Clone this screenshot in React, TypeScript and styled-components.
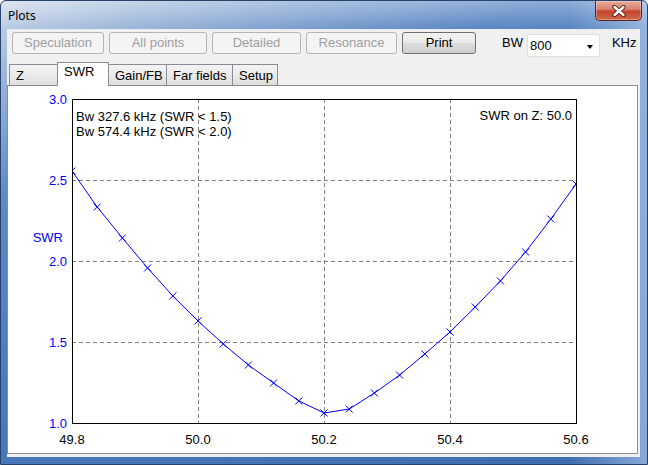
import React from 'react';
import styled, { createGlobalStyle } from 'styled-components';

const GlobalStyle = createGlobalStyle`
  html, body {
    margin: 0;
    padding: 0;
    background: #ffffff;
  }
  body {
    font-family: "Liberation Sans", Arial, sans-serif;
  }
`;

const Window = styled.div`
  width: 648px;
  height: 465px;
  box-sizing: border-box;
  display: flex;
  flex-direction: column;
  border: 1px solid #27436b;
  border-radius: 6px 6px 0 0;
  overflow: hidden;
  background:
    linear-gradient(180deg, rgba(255, 255, 255, 0.3) 0, rgba(255, 255, 255, 0) 26px),
    linear-gradient(90deg, rgba(255, 255, 255, 0) 88%, rgba(190, 212, 240, 0.6) 100%),
    linear-gradient(160deg, #cdd9ea 0%, #a3bbdc 9%, #5e8ac5 28%, #4b7bbe 55%, #3d6bb0 100%);
`;

const TitleBar = styled.div`
  height: 28px;
  display: flex;
  align-items: flex-start;
  padding-left: 7px;
  flex-shrink: 0;
`;

const Title = styled.span`
  align-self: center;
  font-family: "Noto Sans", "Open Sans", sans-serif;
  font-size: 12px;
  color: #000000;
`;

const CloseButton = styled.div`
  margin-left: auto;
  margin-right: 5px;
  width: 47px;
  height: 20px;
  box-sizing: border-box;
  border: 1px solid #5e2419;
  border-top: none;
  border-radius: 0 0 5px 5px;
  background: linear-gradient(180deg, #e7ab9c 0%, #d98470 42%, #c4442d 55%, #cf6a4d 100%);
  box-shadow: inset 0 0 0 1px rgba(255, 255, 255, 0.3);
  display: flex;
  align-items: center;
  justify-content: center;
`;

const Client = styled.div`
  flex: 1;
  margin: 0 7px 7px 6px;
  background: #f0f0f0;
  border-top: 1px solid #e6ecf4;
  display: flex;
  flex-direction: column;
  padding-bottom: 3px;
  min-height: 0;
`;

const Toolbar = styled.div`
  height: 32px;
  box-sizing: border-box;
  padding: 2px 0 0 5px;
  display: flex;
  align-items: flex-start;
  flex-shrink: 0;
`;

const ToolButton = styled.div<{ $w: number; $enabled?: boolean }>`
  width: ${(p) => p.$w}px;
  height: 22px;
  box-sizing: border-box;
  margin-right: 5px;
  border-radius: 3px;
  border: 1px solid ${(p) => (p.$enabled ? '#707070' : '#b4b4b4')};
  background: ${(p) =>
    p.$enabled
      ? 'linear-gradient(180deg, #f2f2f2 0%, #ebebeb 50%, #dddddd 51%, #cfcfcf 100%)'
      : '#f4f4f4'};
  color: ${(p) => (p.$enabled ? '#000000' : '#a0a0a0')};
  font-size: 13px;
  line-height: 20px;
  text-align: center;
`;

const Label = styled.span<{ $ml: number }>`
  margin-left: ${(p) => p.$ml}px;
  font-size: 13px;
  line-height: 22px;
  color: #000000;
`;

const Combo = styled.div`
  margin: 2px 0 0 4px;
  width: 73px;
  height: 23px;
  box-sizing: border-box;
  border: 1px solid #dcdfe3;
  border-radius: 2px;
  background: #ffffff;
  display: flex;
  align-items: center;
  padding: 0 6px 0 2px;
  font-size: 13px;
  color: #000000;
`;

const ComboArrow = styled.span`
  margin-left: auto;
  width: 0;
  height: 0;
  border-left: 3.5px solid transparent;
  border-right: 3.5px solid transparent;
  border-top: 4px solid #000000;
  margin-top: 2px;
`;

const TabRow = styled.div`
  height: 23px;
  display: flex;
  align-items: flex-end;
  padding-left: 2px;
  flex-shrink: 0;
`;

const Tab = styled.div<{ $w: number; $active?: boolean }>`
  width: ${(p) => p.$w}px;
  height: ${(p) => (p.$active ? 24 : 21)}px;
  margin-bottom: ${(p) => (p.$active ? -1 : 0)}px;
  margin-right: -1px;
  box-sizing: border-box;
  border: 1px solid #898c95;
  border-bottom: none;
  background: ${(p) =>
    p.$active ? '#ffffff' : 'linear-gradient(180deg, #f3f3f3 0%, #ebebeb 50%, #dddddd 100%)'};
  position: relative;
  z-index: ${(p) => (p.$active ? 2 : 1)};
  padding: ${(p) => (p.$active ? '1px' : '3px')} 0 0 6px;
  font-size: 13px;
  line-height: 16px;
  color: #000000;
  white-space: nowrap;
`;

const Panel = styled.div`
  height: 369px;
  box-sizing: border-box;
  margin-right: 2px;
  border: 1px solid #898c95;
  background: #ffffff;
  flex-shrink: 0;
`;

const ChartSvg = styled.svg`
  display: block;
  font-family: "Liberation Sans", Arial, sans-serif;
  font-size: 13px;
`;

// plot box inside the panel
const L = 64;
const T = 13;
const R = 568;
const B = 337;
const F0 = 49.8;
const F1 = 50.6;
const S0 = 1.0;
const S1 = 3.0;

const sx = (f: number) => L + ((f - F0) / (F1 - F0)) * (R - L);
const sy = (s: number) => B - ((s - S0) / (S1 - S0)) * (B - T);

const swr = [
  2.556, 2.333, 2.142, 1.957, 1.784, 1.63, 1.488, 1.358, 1.247, 1.136, 1.062,
  1.086, 1.185, 1.296, 1.426, 1.562, 1.716, 1.877, 2.056, 2.259, 2.475,
];

const points = swr.map((s, i) => ({ x: sx(F0 + i * 0.04), y: sy(s) }));

const xTicks = [49.8, 50.0, 50.2, 50.4, 50.6];
const yTicks = [1.0, 1.5, 2.0, 2.5, 3.0];

const SwrChart: React.FC = () => {
  const m = 3.5;
  return (
    <ChartSvg width={629} height={367} viewBox="0 0 629 367">
      <defs>
        <clipPath id="plotClip">
          <rect x={L} y={T} width={R - L + 1} height={B - T + 1} />
        </clipPath>
      </defs>

      {xTicks.slice(1, -1).map((f) => (
        <line
          key={f}
          x1={Math.round(sx(f)) + 0.5}
          x2={Math.round(sx(f)) + 0.5}
          y1={T}
          y2={B}
          stroke="#808080"
          strokeDasharray="4 3"
        />
      ))}
      {yTicks.slice(1, -1).map((s) => (
        <line
          key={s}
          x1={L}
          x2={R}
          y1={Math.round(sy(s)) + 0.5}
          y2={Math.round(sy(s)) + 0.5}
          stroke="#808080"
          strokeDasharray="4 3"
        />
      ))}

      <g clipPath="url(#plotClip)" stroke="#0000ff" strokeWidth={1} fill="none">
        <polyline points={points.map((p) => `${p.x},${p.y}`).join(' ')} />
        {points.map((p, i) => (
          <path
            key={i}
            d={`M${p.x - m} ${p.y - m} L${p.x + m} ${p.y + m} M${p.x + m} ${p.y - m} L${p.x - m} ${p.y + m}`}
          />
        ))}
      </g>

      <rect x={L + 0.5} y={T + 0.5} width={R - L} height={B - T} fill="none" stroke="#000000" />

      {yTicks.map((s) => (
        <text key={s} x={59} y={sy(s)} textAnchor="end" dominantBaseline="central" fill="#0000ff">
          {s.toFixed(1)}
        </text>
      ))}
      <text x={55} y={151} textAnchor="end" dominantBaseline="central" fill="#0000ff">
        SWR
      </text>

      {xTicks.map((f) => (
        <text key={f} x={sx(f)} y={353} textAnchor="middle" dominantBaseline="central" fill="#000000">
          {f.toFixed(1)}
        </text>
      ))}

      <text x={68} y={30} dominantBaseline="central" fill="#000000">
        Bw 327.6 kHz (SWR &lt; 1.5)
      </text>
      <text x={68} y={45} dominantBaseline="central" fill="#000000">
        Bw 574.4 kHz (SWR &lt; 2.0)
      </text>
      <text x={564} y={29} textAnchor="end" dominantBaseline="central" fill="#000000">
        SWR on Z: 50.0
      </text>
    </ChartSvg>
  );
};

const App: React.FC = () => {
  return (
    <>
      <GlobalStyle />
      <Window>
        <TitleBar>
          <Title>Plots</Title>
          <CloseButton>
            <svg width="14" height="12" viewBox="0 0 14 12">
              <path d="M2.5 2 L11.5 10 M11.5 2 L2.5 10" stroke="#4a1a12" strokeWidth={4.2} strokeLinecap="round" />
              <path d="M2.5 2 L11.5 10 M11.5 2 L2.5 10" stroke="#ffffff" strokeWidth={2.4} strokeLinecap="round" />
            </svg>
          </CloseButton>
        </TitleBar>
        <Client>
          <Toolbar>
            <ToolButton $w={92}>Speculation</ToolButton>
            <ToolButton $w={98}>All points</ToolButton>
            <ToolButton $w={89}>Detailed</ToolButton>
            <ToolButton $w={91}>Resonance</ToolButton>
            <ToolButton $w={74} $enabled>
              Print
            </ToolButton>
            <Label $ml={21}>BW</Label>
            <Combo>
              800
              <ComboArrow />
            </Combo>
            <Label $ml={12}>KHz</Label>
          </Toolbar>
          <TabRow>
            <Tab $w={49}>Z</Tab>
            <Tab $w={52} $active>
              SWR
            </Tab>
            <Tab $w={59}>Gain/FB</Tab>
            <Tab $w={67}>Far fields</Tab>
            <Tab $w={46}>Setup</Tab>
          </TabRow>
          <Panel>
            <SwrChart />
          </Panel>
        </Client>
      </Window>
    </>
  );
};

export default App;
